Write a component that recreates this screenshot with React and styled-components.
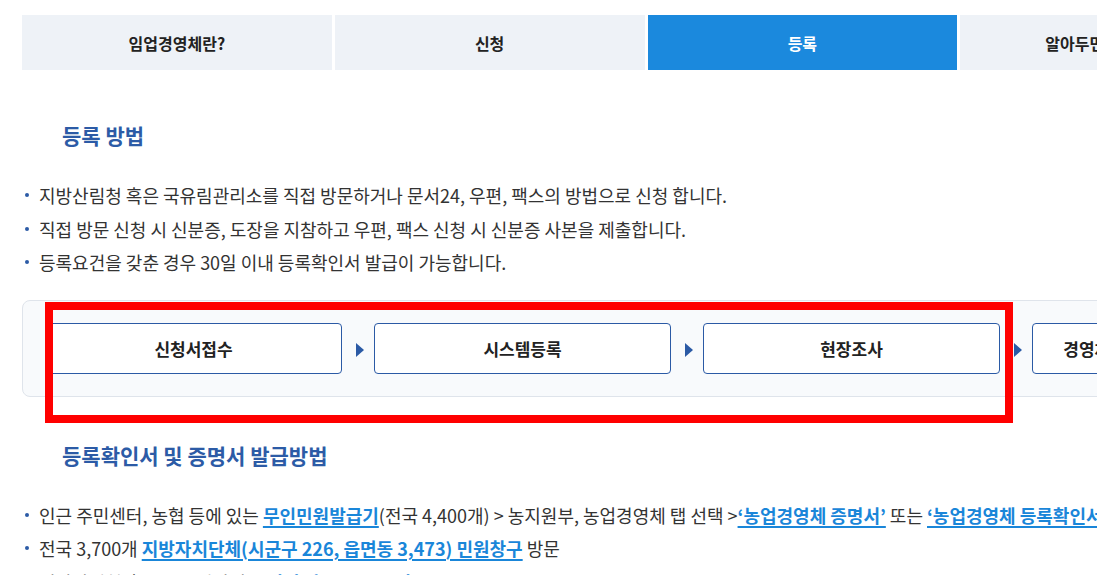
import React from "react";
import styled, { createGlobalStyle } from "styled-components";

const Global = createGlobalStyle`
  html, body { margin: 0; padding: 0; background: #fff; overflow: hidden; }
  body { font-family: "Noto Sans CJK KR", "Noto Sans", sans-serif; color: #333; }
`;

const Page = styled.div`
  position: relative;
  width: 1420px;
  padding: 15px 0 0 22px;
  box-sizing: border-box;
`;

const Tabs = styled.nav`
  display: flex;
  gap: 3px;
  width: 1248px;
`;

const Tab = styled.div`
  flex: 1 1 0;
  height: 55px;
  display: flex;
  align-items: center;
  justify-content: center;
  font-size: 16px;
  font-weight: 700;
  white-space: nowrap;
  background: ${(p) => (p.$active ? "#1b89dd" : "#eef2f7")};
  color: ${(p) => (p.$active ? "#fff" : "#222")};
`;

const Heading = styled.h3`
  margin: ${(p) => p.$top}px 0 0 40px;
  font-size: 21px;
  line-height: 28px;
  font-weight: 700;
  color: #2c5ba6;
`;

const List = styled.ul`
  list-style: none;
  margin: 30px 0 0;
  padding: 0;
`;

const Item = styled.li`
  position: relative;
  padding-left: 17px;
  font-size: 18px;
  line-height: 33.5px;
  color: #333;
  white-space: nowrap;

  &::before {
    content: "";
    position: absolute;
    left: 3px;
    top: 14px;
    width: 4px;
    height: 4px;
    border-radius: 50%;
    background: #2c5ba6;
  }
`;

const Link = styled.a`
  color: #1a86d9;
  font-weight: 700;
  text-decoration: underline;
  text-underline-offset: 3px;
  text-decoration-thickness: 2px;
`;

const Flow = styled.div`
  margin-top: 20px;
  display: flex;
  align-items: center;
  width: max-content;
  padding: 22px;
  border: 1px solid #dfe4eb;
  border-radius: 8px;
  background: #f8fafc;
`;

const Step = styled.div`
  flex: 0 0 297px;
  height: 51px;
  box-sizing: border-box;
  display: flex;
  align-items: center;
  justify-content: center;
  border: 1px solid #2b5aa5;
  border-radius: 4px;
  background: #fff;
  font-size: 17px;
  font-weight: 700;
  color: #222;
  white-space: nowrap;
`;

const Arrow = styled.div`
  flex: 0 0 32px;
  display: flex;
  justify-content: center;
  padding: 3px 0 0 3px;
  box-sizing: border-box;

  &::after {
    content: "";
    width: 0;
    height: 0;
    border-top: 7px solid transparent;
    border-bottom: 7px solid transparent;
    border-left: 8px solid #2b5aa5;
  }
`;

const Highlight = styled.div`
  position: absolute;
  left: 45px;
  top: 302px;
  width: 968px;
  height: 121px;
  box-sizing: border-box;
  border: 8px solid #ff0000;
  pointer-events: none;
`;

const tabs = ["임업경영체란?", "신청", "등록", "알아두면 유용한 정보"];
const steps = ["신청서접수", "시스템등록", "현장조사", "경영체 등록확인서 및 증명서 발급"];

export default function App() {
  return (
    <>
      <Global />
      <Page>
        <Tabs>
          {tabs.map((t, i) => (
            <Tab key={t} $active={i === 2}>
              {t}
            </Tab>
          ))}
        </Tabs>

        <Heading $top={51}>등록 방법</Heading>
        <List>
          <Item>지방산림청 혹은 국유림관리소를 직접 방문하거나 문서24, 우편, 팩스의 방법으로 신청 합니다.</Item>
          <Item>직접 방문 신청 시 신분증, 도장을 지참하고 우편, 팩스 신청 시 신분증 사본을 제출합니다.</Item>
          <Item>등록요건을 갖춘 경우 30일 이내 등록확인서 발급이 가능합니다.</Item>
        </List>

        <Flow>
          {steps.map((s, i) => (
            <React.Fragment key={s}>
              {i > 0 && <Arrow />}
              <Step>{s}</Step>
            </React.Fragment>
          ))}
        </Flow>

        <Heading $top={44}>등록확인서 및 증명서 발급방법</Heading>
        <List>
          <Item>
            인근 주민센터, 농협 등에 있는 <Link>무인민원발급기</Link>(전국 4,400개) &gt; 농지원부, 농업경영체 탭 선택 &gt;
            <Link>‘농업경영체 증명서’</Link> 또는 <Link>‘농업경영체 등록확인서’</Link>
          </Item>
          <Item>
            전국 3,700개 <Link>지방자치단체(시군구 226, 읍면동 3,473) 민원창구</Link> 방문
          </Item>
          <Item>
            지방산림청 혹은 국유림관리소 <Link>직접 방문</Link> 또는 <Link>우편</Link>
          </Item>
        </List>

        <Highlight />
      </Page>
    </>
  );
}
